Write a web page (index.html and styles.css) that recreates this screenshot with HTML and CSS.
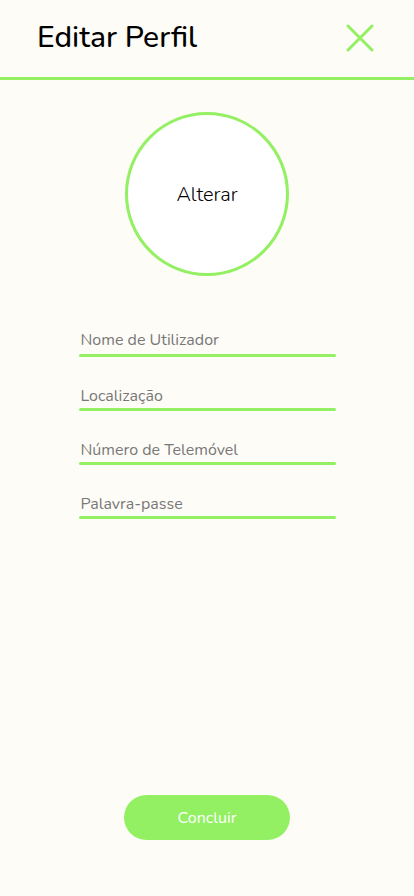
FILE: index.html
```html
<!DOCTYPE html>
<html lang="pt">
<head>
  <meta charset="utf-8">
  <meta name="viewport" content="width=device-width, initial-scale=1">
  <title>Editar Perfil</title>
  <link rel="stylesheet" href="styles.css">
</head>
<body>
  <header class="header">
    <h1 class="title">Editar Perfil</h1>
    <button class="close" type="button" aria-label="Fechar">
      <svg class="close-icon" viewBox="0 0 28 28" aria-hidden="true">
        <path d="M2 2 26 26M26 2 2 26"/>
      </svg>
    </button>
  </header>
  <form class="form">
    <button class="avatar" type="button">Alterar</button>
    <div class="fields">
      <div class="field field-first">
        <input class="input" type="text" placeholder="Nome de Utilizador" aria-label="Nome de Utilizador">
      </div>
      <div class="field">
        <input class="input" type="text" placeholder="Localização" aria-label="Localização">
      </div>
      <div class="field">
        <input class="input" type="tel" placeholder="Número de Telemóvel" aria-label="Número de Telemóvel">
      </div>
      <div class="field">
        <input class="input" type="password" placeholder="Palavra-passe" aria-label="Palavra-passe">
      </div>
    </div>
    <button class="submit" type="submit">Concluir</button>
  </form>
</body>
</html>
```

FILE: styles.css
```css
:root {
  --green: #92f062;
  --paper: #fefcf7;
}

* {
  box-sizing: border-box;
}

body {
  display: flex;
  flex-direction: column;
  min-height: 100vh;
  margin: 0;
  background: var(--paper);
  color: #000;
  font-family: Nunito, "Open Sans", "Noto Sans", sans-serif;
}

button,
input {
  font-family: inherit;
}

button {
  padding: 0;
  border: 0;
  cursor: pointer;
}

.header {
  display: flex;
  align-items: center;
  justify-content: space-between;
  padding: 17px 40px 18px 37px;
  border-bottom: 3px solid var(--green);
}

.title {
  margin: 0;
  font-size: 30px;
  font-weight: 500;
  line-height: 42px;
}

.close {
  display: flex;
  background: none;
}

.close-icon {
  width: 28px;
  height: 28px;
  fill: none;
  stroke: var(--green);
  stroke-width: 3;
  stroke-linecap: round;
}

.form {
  display: flex;
  flex: 1;
  flex-direction: column;
  align-items: center;
  padding: 32px 16px 56px;
}

.avatar {
  width: 164px;
  height: 164px;
  border: 3px solid var(--green);
  border-radius: 50%;
  background: #fff;
  color: #000;
  font-size: 20px;
  font-weight: 300;
}

.fields {
  display: flex;
  flex-direction: column;
  gap: 27px;
  width: 100%;
  max-width: 257px;
  margin-top: 52px;
}

.field {
  display: flex;
  flex-direction: column;
}

.field::after {
  content: "";
  height: 3px;
  border-radius: 2px;
  background: var(--green);
}

.field-first {
  gap: 2px;
}

.input {
  width: 100%;
  height: 24px;
  padding: 0 2px;
  border: 0;
  background: none;
  color: #000;
  font-size: 16px;
  font-weight: 400;
  line-height: 24px;
  outline: 0;
}

.input::placeholder {
  color: #787878;
  opacity: 1;
}

.submit {
  width: 166px;
  height: 45px;
  margin-top: auto;
  border-radius: 23px;
  background: var(--green);
  color: #fff;
  font-size: 16px;
}
```
